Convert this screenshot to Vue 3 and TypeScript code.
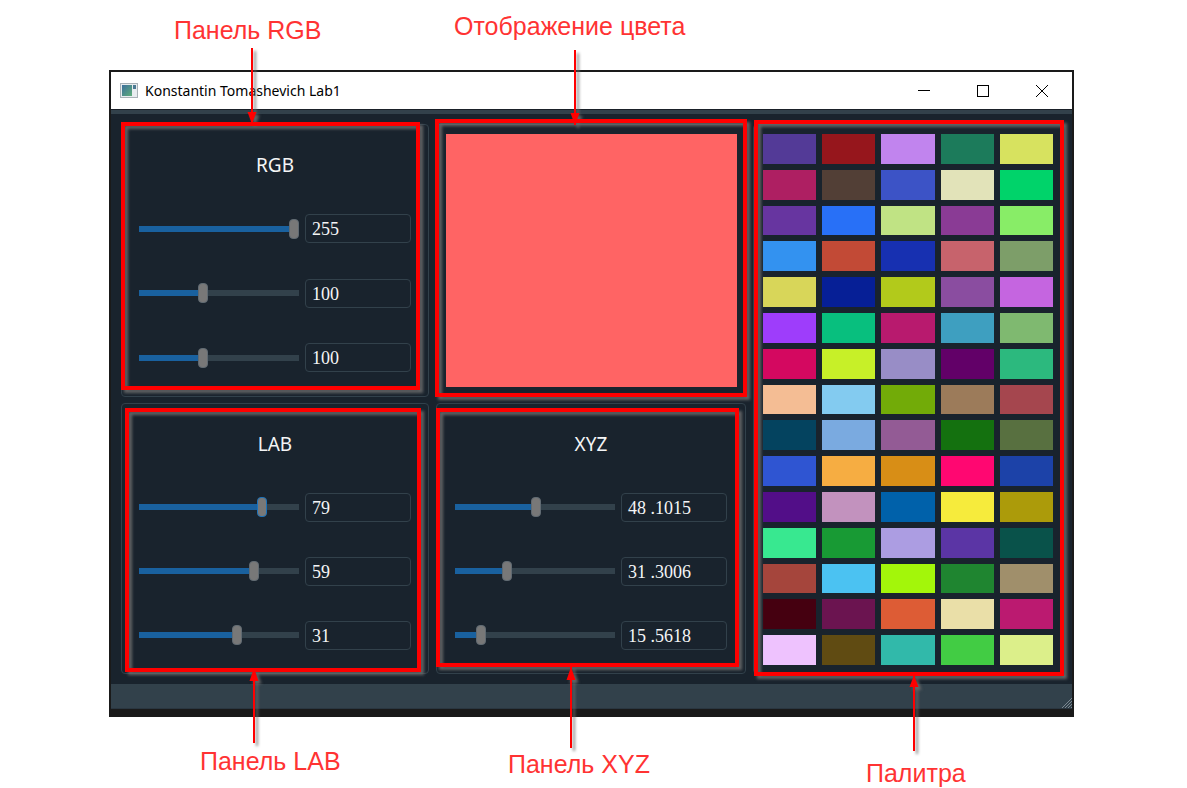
<template>
  <div class="page">
    <div class="window">
      <div class="titlebar">
        <svg class="app-icon" width="18" height="15" viewBox="0 0 18 15">
          <defs>
            <linearGradient id="ico" x1="0" y1="0" x2="1" y2="1">
              <stop offset="0" stop-color="#3d6f9c" />
              <stop offset="1" stop-color="#5fae7a" />
            </linearGradient>
          </defs>
          <rect x="0.5" y="0.5" width="17" height="14" fill="#e8ecef" stroke="#a9b1b7" />
          <rect x="2" y="2" width="10" height="11" fill="url(#ico)" />
          <rect x="13" y="2" width="3" height="4" fill="#4d7a93" />
        </svg>
        <span class="win-title">Konstantin Tomashevich Lab1</span>
        <div class="win-controls">
          <svg width="12" height="12" viewBox="0 0 12 12"><path d="M0 5.5H12" stroke="#000" fill="none" /></svg>
          <svg width="12" height="12" viewBox="0 0 12 12"><rect x="0.5" y="0.5" width="11" height="11" stroke="#000" fill="none" /></svg>
          <svg width="12" height="12" viewBox="0 0 12 12"><path d="M0 0L12 12M12 0L0 12" stroke="#000" fill="none" /></svg>
        </div>
      </div>
      <div class="menu-strip"></div>

      <div class="content">
        <section v-for="panel in panels" :key="panel.title" class="panel sliders">
          <h2>{{ panel.title }}</h2>
          <div v-for="ch in panel.channels" :key="ch.text" class="row">
            <div class="slider">
              <div class="fill" :style="{ width: handleX(ch) + 'px' }"></div>
              <div class="handle" :class="{ focused: ch.focused }" :style="{ left: handleX(ch) - 5 + 'px' }"></div>
            </div>
            <div class="value">{{ ch.text }}</div>
          </div>
        </section>

        <section class="panel display">
          <div class="current-color"></div>
        </section>

        <section class="panel palette">
          <div v-for="(color, i) in palette" :key="i" class="swatch" :style="{ background: color }"></div>
        </section>
      </div>

      <div class="statusbar">
        <svg width="11" height="11" viewBox="0 0 11 11" class="grip">
          <path d="M11 1L1 11M11 4L4 11M11 7L7 11M11 10L10 11" stroke="#7b8790" fill="none" />
        </svg>
      </div>
    </div>

    <!-- annotations drawn over the screenshot -->
    <svg class="notes" width="1187" height="788" viewBox="0 0 1187 788">
      <g class="shadowed">
        <rect v-for="(b, i) in boxes" :key="i" :x="b[0]" :y="b[1]" :width="b[2]" :height="b[3]" fill="none" stroke="#ff0000" stroke-width="4" />
        <g v-for="(a, i) in arrows" :key="i">
          <path :d="`M${a.x} ${a.from}V${a.to}`" stroke="#ff0000" stroke-width="2" fill="none" />
          <polygon :points="`${a.x},${a.to} ${a.x - 4.5},${a.base} ${a.x + 4.5},${a.base}`" fill="#ff0000" />
        </g>
      </g>
    </svg>
    <span v-for="l in labels" :key="l.text" class="note" :style="{ left: l.x + 'px', top: l.y + 'px' }">{{ l.text }}</span>
  </div>
</template>

<script setup lang="ts">
interface Channel {
  text: string
  value: number
  min: number
  max: number
  focused?: boolean
}

const panels: { title: string; channels: Channel[] }[] = [
  {
    title: 'RGB',
    channels: [
      { text: '255', value: 255, min: 0, max: 255 },
      { text: '100', value: 100, min: 0, max: 255 },
      { text: '100 ', value: 100, min: 0, max: 255 },
    ],
  },
  {
    title: 'LAB',
    channels: [
      { text: '79', value: 79, min: 0, max: 100, focused: true },
      { text: '59', value: 59, min: -128, max: 127 },
      { text: '31', value: 31, min: -128, max: 127 },
    ],
  },
  {
    title: 'XYZ',
    channels: [
      { text: '48 .1015', value: 48.1, min: 0, max: 95.05 },
      { text: '31 .3006', value: 31.3, min: 0, max: 100 },
      { text: '15 .5618', value: 15.56, min: 0, max: 108.88 },
    ],
  },
]

const palette = [
  '#533a97', '#96161c', '#c184ee', '#1c7b5b', '#d7e25f',
  '#ae1f62', '#523f36', '#3c53c6', '#e2e3b9', '#00d36a',
  '#6735a0', '#2870f7', '#c0e384', '#8a3b95', '#88ed67',
  '#3392f0', '#c24a36', '#1730b1', '#c7636c', '#7d9e69',
  '#d8d659', '#061f96', '#b2ca1b', '#8a4da0', '#c565e0',
  '#9e3dfb', '#08bf7e', '#b81a6e', '#3e9fc0', '#7fb970',
  '#d40860', '#c7f028', '#988dc6', '#620068', '#2cb97e',
  '#f4bd94', '#83cbf0', '#72ab08', '#9c7b5a', '#a5464e',
  '#04435f', '#7aaae0', '#935b95', '#14710f', '#587040',
  '#2f55d2', '#f6ad42', '#d88e16', '#ff0771', '#1c42a8',
  '#520e88', '#c292be', '#0061aa', '#f6eb3c', '#ac9b0a',
  '#38e890', '#189a34', '#ac9de2', '#5b35a5', '#09524a',
  '#a5453c', '#4bc2f2', '#a3f60a', '#1f8530', '#a08f6b',
  '#450010', '#6b1450', '#dd5c35', '#eadfa8', '#bb1a70',
  '#eec2fe', '#604b12', '#31b9aa', '#42cc44', '#dcef8a',
]

// x, y, width, height of the red frames, measured on stroke centre
const boxes = [
  [123, 124, 295, 264],
  [127, 410, 292, 260],
  [437, 121, 308, 274],
  [438, 410, 299, 255],
  [756, 122, 306, 552],
]

const arrows = [
  { x: 252, from: 48, to: 124, base: 112 },
  { x: 575, from: 50, to: 125, base: 113 },
  { x: 254, from: 743, to: 668, base: 681 },
  { x: 571, from: 748, to: 667, base: 680 },
  { x: 914, from: 751, to: 675, base: 687 },
]

const labels = [
  { text: 'Панель RGB', x: 174, y: 16 },
  { text: 'Отображение цвета', x: 454, y: 12 },
  { text: 'Панель LAB', x: 200, y: 747 },
  { text: 'Панель XYZ', x: 508, y: 750 },
  { text: 'Палитра', x: 866, y: 759 },
]

// the handle travels about 150px inside the 160px groove
function handleX(ch: Channel) {
  return 5 + (149.5 * (ch.value - ch.min)) / (ch.max - ch.min)
}
</script>

<style>
html,
body {
  background: #fff;
}
</style>

<style scoped>
.page {
  position: relative;
  width: 1187px;
  height: 788px;
  padding: 70px 0 0 109px;
  box-sizing: border-box;
  background: #fff;
  overflow: hidden;
}

.window {
  width: 965px;
  height: 647px;
  box-sizing: border-box;
  display: flex;
  flex-direction: column;
  background: #19232d;
  border: solid #1a1a1a;
  border-width: 2px 2px 8px;
}

.titlebar {
  height: 37px;
  flex: none;
  display: flex;
  align-items: center;
  padding-left: 9px;
  background: #fff;
}

.app-icon {
  margin-right: 7px;
}

.win-title {
  font: 14px "Noto Sans", sans-serif;
  color: #000;
}

.win-controls {
  margin-left: auto;
  display: flex;
  gap: 47px;
  padding-right: 24px;
}

.menu-strip {
  height: 4px;
  flex: none;
  background: #32414b;
  border-top: 1px solid #1a2028;
}

.content {
  flex: 1;
  display: grid;
  grid-template-columns: 308px 310px 310px;
  grid-template-rows: 273px 271px;
  gap: 6px 7px;
  padding: 10px 9px 10px 10px;
  background: #19232d;
}

.panel {
  box-sizing: border-box;
  border: 1px solid #32414b;
  border-radius: 4px;
}

.sliders {
  display: grid;
  grid-template-rows: repeat(4, 1fr);
  justify-items: center;
  align-items: center;
  padding: 7px 0 6px;
}

.sliders h2 {
  margin: 1px 0 0;
  font: 400 19px "Noto Sans", sans-serif;
  color: #f4f5f6;
}

.row {
  width: 272px;
  display: grid;
  grid-template-columns: 160px 1fr;
  gap: 6px;
  align-items: center;
}

.slider {
  position: relative;
  height: 6px;
  background: #32414b;
}

.fill {
  height: 100%;
  background: #19619f;
}

.handle {
  position: absolute;
  top: -7px;
  width: 10px;
  height: 20px;
  box-sizing: border-box;
  border: 1px solid #606a72;
  border-radius: 4px;
  background: #787878;
}

.handle.focused {
  border-color: #1a72bb;
}

.value {
  height: 29px;
  box-sizing: border-box;
  padding-left: 6px;
  border: 1px solid #32414b;
  border-radius: 4px;
  font: 18px/28px "Liberation Serif", serif;
  color: #f4f5f6;
  white-space: pre;
}

.display {
  grid-column: 2;
  grid-row: 1;
  padding: 9px 8px 9px 9px;
}

.current-color {
  height: 100%;
  background: #ff6464;
}

.palette {
  grid-column: 3;
  grid-row: 1 / span 2;
  padding: 9px 9px 8px;
  display: grid;
  grid-template-columns: repeat(5, 1fr);
  grid-template-rows: repeat(15, 1fr);
  gap: 6px;
}

.statusbar {
  height: 25px;
  flex: none;
  display: flex;
  justify-content: flex-end;
  align-items: flex-end;
  background: #32414b;
  border-bottom: 1px solid #2a3640;
  box-sizing: border-box;
}

.notes {
  position: absolute;
  left: 0;
  top: 0;
  pointer-events: none;
}

.shadowed {
  filter: drop-shadow(3px 3px 1.5px rgba(110, 110, 110, 0.85));
}

.note {
  position: absolute;
  font: 25px "Liberation Sans", sans-serif;
  color: #ff3333;
  white-space: nowrap;
}
</style>
